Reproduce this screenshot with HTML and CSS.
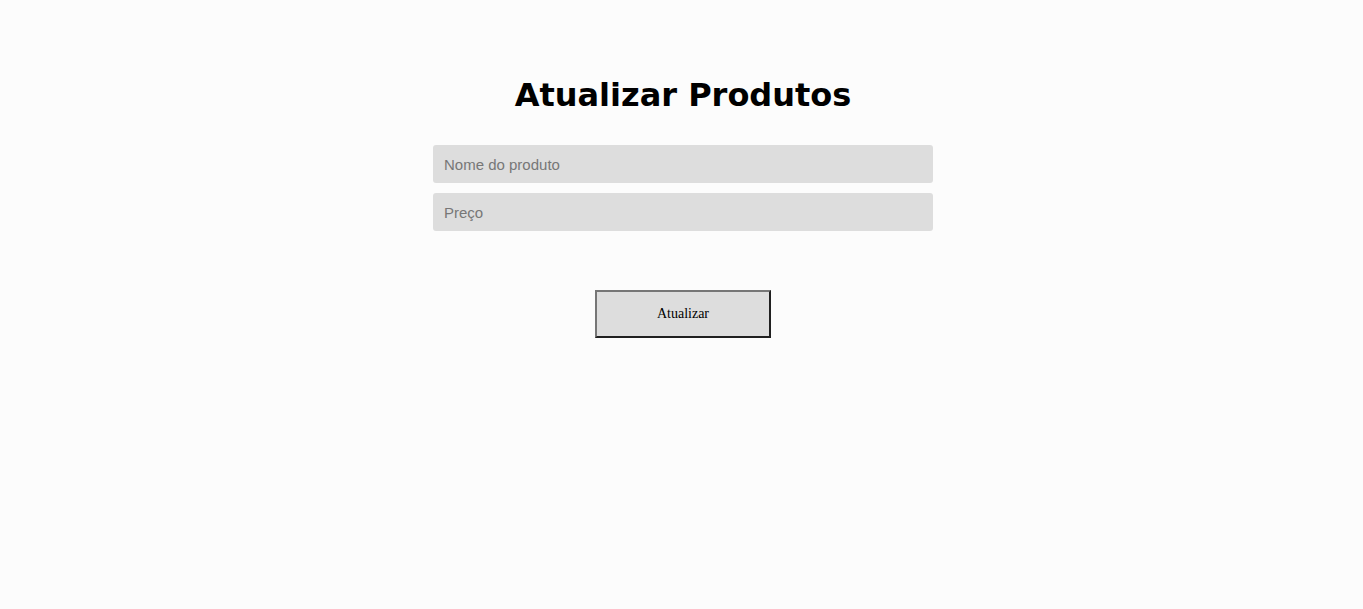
FILE: index.html
```html
<!DOCTYPE html>
<html lang="pt">
<head>
<meta charset="utf-8">
<title>Atualizar Produtos</title>
<link rel="stylesheet" href="styles.css">
</head>
<body>
<main class="page">
  <h1 class="title">Atualizar Produtos</h1>
  <form class="form">
    <input class="field" type="text" placeholder="Nome do produto">
    <input class="field" type="text" placeholder="Preço">
    <button class="btn" type="button">Atualizar</button>
  </form>
</main>
</body>
</html>
```
FILE: styles.css
```css
html, body {
  margin: 0;
  padding: 0;
  background: #fcfcfc;
}
.page {
  display: flex;
  flex-direction: column;
  align-items: center;
  padding-top: 76px;
  padding-left: 3px;
}
.title {
  margin: 0;
  font-family: "DejaVu Sans", Verdana, sans-serif;
  font-weight: bold;
  font-size: 32px;
  line-height: 38px;
  color: #000;
}
.form {
  display: flex;
  flex-direction: column;
  align-items: center;
  gap: 10px;
  margin-top: 31px;
}
.field {
  box-sizing: border-box;
  width: 500px;
  height: 38px;
  border: none;
  border-radius: 3px;
  background: #dddddd;
  padding: 0 11px;
  font-family: "Liberation Sans", Arial, sans-serif;
  font-size: 15px;
  color: #333;
  outline: none;
}
.field::placeholder {
  color: #777;
}
.btn {
  box-sizing: border-box;
  width: 176px;
  height: 48px;
  margin-top: 49px;
  background: #dddddd;
  border: 2px solid;
  border-color: #767676 #202020 #202020 #767676;
  font-family: "Liberation Serif", "Times New Roman", serif;
  font-size: 14px;
  color: #000;
  padding: 0;
}
```
